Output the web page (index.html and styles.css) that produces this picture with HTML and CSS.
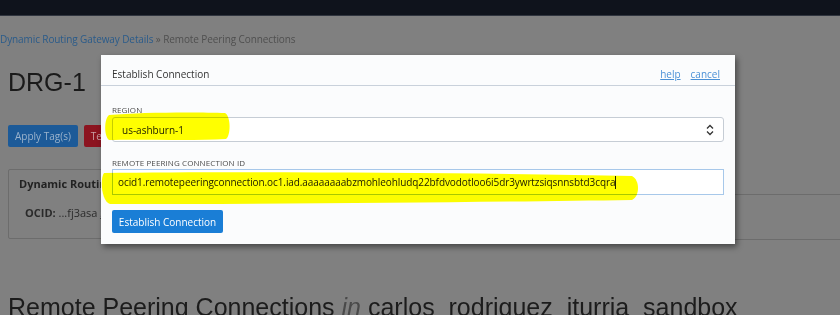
FILE: index.html
```html
<!DOCTYPE html>
<html lang="en">
<head>
    <meta charset="UTF-8">
    <title>Remote Peering Connections</title>
    <link rel="stylesheet" href="styles.css">
</head>
<body>
    <div class="topbar"></div>

    <div class="page">
        <div class="breadcrumb">
            <a href="#">Dynamic Routing Gateway Details</a> &raquo; Remote Peering Connections
        </div>

        <h1>DRG-1</h1>

        <div class="actions">
            <button class="btn btn-blue">Apply Tag(s)</button>
            <button class="btn btn-red">Terminate</button>
        </div>

        <div class="info-row">
            <div class="panel">
                <div class="panel-title">Dynamic Routing Gateway Information</div>
                <div class="panel-line"><b>OCID:</b> ...fj3asa <u>Show</u> <u>Copy</u></div>
            </div>
            <div class="panel-side"></div>
        </div>

        <h2>Remote Peering Connections <i>in</i> carlos_rodriguez_iturria_sandbox</h2>
    </div>

    <div class="modal">
        <div class="modal-header">
            <span class="modal-title">Establish Connection</span>
            <span class="modal-links"><a href="#">help</a><a href="#">cancel</a></span>
        </div>
        <div class="modal-body">
            <label class="field-label">Region</label>
            <div class="select">
                <span>us-ashburn-1</span>
                <svg class="chevrons" width="8" height="12" viewBox="0 0 8 12">
                    <path d="M1 4.5 L4 1.5 L7 4.5 M1 7.5 L4 10.5 L7 7.5" fill="none" stroke="#333" stroke-width="1.3"/>
                </svg>
            </div>

            <label class="field-label field-gap">Remote Peering Connection ID</label>
            <div class="input">ocid1.remotepeeringconnection.oc1.iad.aaaaaaaabzmohleohludq22bfdvodotloo6i5dr3ywrtzsiqsnnsbtd3cqra<span class="caret"></span></div>

            <button class="btn-primary">Establish Connection</button>
        </div>
    </div>

    <!-- highlighter marks -->
    <svg class="marks" width="840" height="315" viewBox="0 0 840 315">
        <path d="M109 115 C140 112 200 112 225 113 C231 116 231 136 226 139 C190 141 140 139 109 140 C104 136 104 119 109 115 Z" fill="#ffff00"/>
        <path d="M104 173 C250 171 500 173 632 176 C640 180 640 196 632 200 C500 202 300 204 110 204 C101 201 100 178 104 173 Z" fill="#ffff00"/>
    </svg>
</body>
</html>
```

FILE: styles.css
```css
body {
    margin: 0;
    background-color: #808080;
    font-family: "Open Sans", "Noto Sans", sans-serif;
    color: #1c1c1c;
    height: 315px;
    overflow: hidden;
    position: relative;
}
.topbar {
    height: 15px;
    background-color: #0f131c;
    border-bottom: 1px solid #30353f;
}
.page {
    padding-top: 15px;
}
.breadcrumb {
    font-size: 10px;
    line-height: 16px;
    color: #4f4f4f;
    letter-spacing: -0.1px;
}
.breadcrumb a {
    color: #2a5b8a;
    text-decoration: none;
}
h1 {
    font-family: "Liberation Sans", Arial, sans-serif;
    font-weight: normal;
    font-size: 25px;
    line-height: 30px;
    margin: 20px 0 0 8px;
    color: #1a1a1a;
}
.actions {
    display: flex;
    gap: 6px;
    margin: 28px 0 0 8px;
}
.btn {
    font-family: "Open Sans", sans-serif;
    font-size: 10px;
    height: 22px;
    padding: 0 7px;
    border: none;
    border-radius: 2px;
    white-space: nowrap;
}
.btn-blue {
    background-color: #1c5a98;
    color: #9bb3cc;
}
.btn-red {
    background-color: #8c1420;
    color: #c9a0a6;
}
.info-row {
    display: flex;
    margin: 22px 0 0 8px;
}
.panel {
    width: 520px;
    height: 70px;
    border: 1px solid #6c6c6c;
    border-radius: 2px;
    padding: 6px 10px;
    box-sizing: border-box;
}
.panel-title {
    font-size: 11px;
    font-weight: bold;
    color: #222;
}
.panel-line {
    margin: 14px 0 0 6px;
    font-size: 11px;
    color: #2a2a2a;
}
.panel-side {
    flex: 1;
    margin-top: 25px;
    height: 44px;
    border-top: 1px solid #6c6c6c;
    border-bottom: 1px solid #6c6c6c;
}
h2 {
    font-family: "Liberation Sans", Arial, sans-serif;
    font-weight: normal;
    font-size: 25px;
    margin: 53px 0 0 8px;
    white-space: nowrap;
    color: #1c1c1c;
}
h2 i {
    color: #4a4a4a;
}

.modal {
    position: absolute;
    left: 101px;
    top: 55px;
    width: 634px;
    height: 189px;
    background-color: #fbfcfd;
    box-shadow: 2px 3px 6px rgba(0, 0, 0, 0.45);
}
.modal-header {
    height: 31px;
    border-bottom: 1px solid #c9d1db;
    display: flex;
    align-items: center;
    justify-content: space-between;
    padding: 7px 15px 0 11px;
    box-sizing: border-box;
    font-size: 10px;
    color: #333;
}
.modal-links a {
    color: #4a90d6;
    margin-left: 10px;
}
.modal-body {
    padding: 19px 11px 0 11px;
}
.field-label {
    display: block;
    font-size: 8px;
    line-height: 10px;
    text-transform: uppercase;
    color: #4d4d4d;
    letter-spacing: 0.1px;
}
.field-gap {
    margin-top: 16px;
}
.select {
    margin-top: 2px;
    height: 25px;
    border: 1px solid #c6cdd5;
    border-radius: 3px;
    background-color: #fff;
    display: flex;
    align-items: center;
    justify-content: space-between;
    padding: 0 9px 0 9px;
    box-sizing: border-box;
    font-size: 10px;
    color: #222;
}
.input {
    margin-top: 1px;
    height: 26px;
    border: 1px solid #a7c8ea;
    background-color: #fff;
    display: flex;
    align-items: center;
    padding: 0 5px;
    box-sizing: border-box;
    font-size: 10px;
    letter-spacing: -0.09px;
    color: #222;
}
.caret {
    display: inline-block;
    width: 1px;
    height: 13px;
    background-color: #222;
}
.btn-primary {
    margin-top: 15px;
    width: 111px;
    height: 23px;
    border: none;
    border-radius: 2px;
    background-color: #1a7ed6;
    color: #fff;
    font-family: "Open Sans", sans-serif;
    font-size: 10px;
    padding: 0;
}
.marks {
    position: absolute;
    left: 0;
    top: 0;
    mix-blend-mode: multiply;
    pointer-events: none;
}
```
